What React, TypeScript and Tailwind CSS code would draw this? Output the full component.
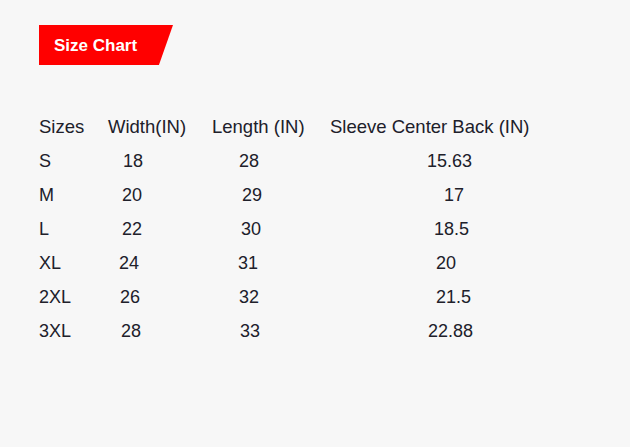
import React from "react";

const rows: { s: string; w: [string, number]; l: [string, number]; c: [string, number] }[] = [
  { s: "S", w: ["18", 15], l: ["28", 27], c: ["15.63", 97] },
  { s: "M", w: ["20", 14], l: ["29", 30], c: ["17", 114] },
  { s: "L", w: ["22", 14], l: ["30", 29], c: ["18.5", 104] },
  { s: "XL", w: ["24", 11], l: ["31", 26], c: ["20", 106] },
  { s: "2XL", w: ["26", 12], l: ["32", 27], c: ["21.5", 106] },
  { s: "3XL", w: ["28", 13], l: ["33", 28], c: ["22.88", 98] },
];

export default function App() {
  return (
    <div
      className="w-[630px] h-[447px] bg-[#f7f7f7] text-[#20202a] overflow-hidden"
      style={{ fontFamily: '"Liberation Sans", Arial, sans-serif' }}
    >
      <div className="pt-[25px] pl-[39px]">
        <div className="w-[134px] h-[40px] bg-[#ff0000] [clip-path:polygon(0_0,100%_0,89.5%_100%,0_100%)] flex items-center pl-[15px]">
          <span className="text-white font-bold text-[17px] leading-none">Size Chart</span>
        </div>
      </div>
      <div className="pl-[39px] mt-[45px] text-[18px] font-light">
        <div className="flex leading-[34px] text-[18.5px]">
          <div className="w-[69px]">Sizes</div>
          <div className="w-[104px]">Width(IN)</div>
          <div className="w-[118px]">Length (IN)</div>
          <div>Sleeve Center Back (IN)</div>
        </div>
        {rows.map((r) => (
          <div key={r.s} className="flex leading-[34px]">
            <div className="w-[69px]">{r.s}</div>
            <div className="w-[104px]" style={{ paddingLeft: r.w[1] }}>{r.w[0]}</div>
            <div className="w-[118px]" style={{ paddingLeft: r.l[1] }}>{r.l[0]}</div>
            <div style={{ paddingLeft: r.c[1] }}>{r.c[0]}</div>
          </div>
        ))}
      </div>
    </div>
  );
}
